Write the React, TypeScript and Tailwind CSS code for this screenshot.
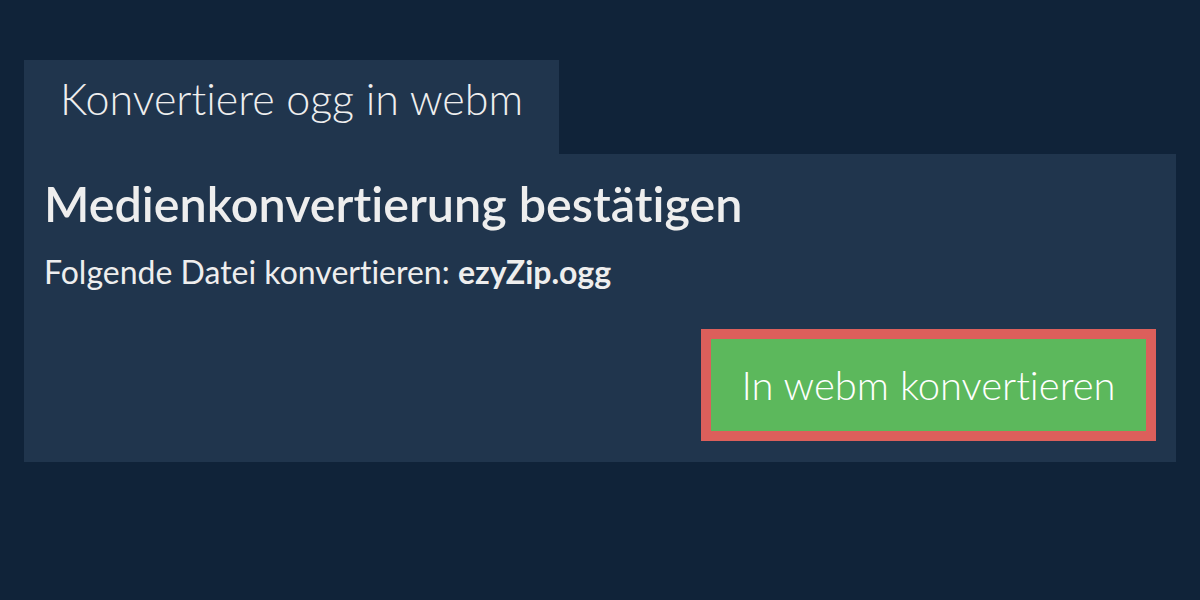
export default function App() {
  return (
    <div className="min-h-[600px] w-[1200px] bg-[#102339] px-6 pt-[60px] font-['Lato',sans-serif] text-[#eeeeee] [font-variant-ligatures:none]">
      <div className="flex">
        <div className="h-[94px] w-[535px] bg-[#20354d] pl-9 pt-[17px]">
          <span className="text-[43px] font-light leading-none">Konvertiere ogg in webm</span>
        </div>
      </div>
      <div className="bg-[#20354d] px-5 pb-[21px] pt-[25px]">
        <h1 className="text-[48.5px] font-semibold leading-none">Medienkonvertierung bestätigen</h1>
        <p className="mt-7 text-[32px] leading-none">
          Folgende Datei konvertieren: <b className="font-bold">ezyZip.ogg</b>
        </p>
        <div className="mt-[41px] flex justify-end">
          <button className="h-[112px] w-[455px] border-[10px] border-[#dc5f5b] bg-[#5cb85c] text-[40px] font-light leading-none text-white">
            In webm konvertieren
          </button>
        </div>
      </div>
    </div>
  );
}
